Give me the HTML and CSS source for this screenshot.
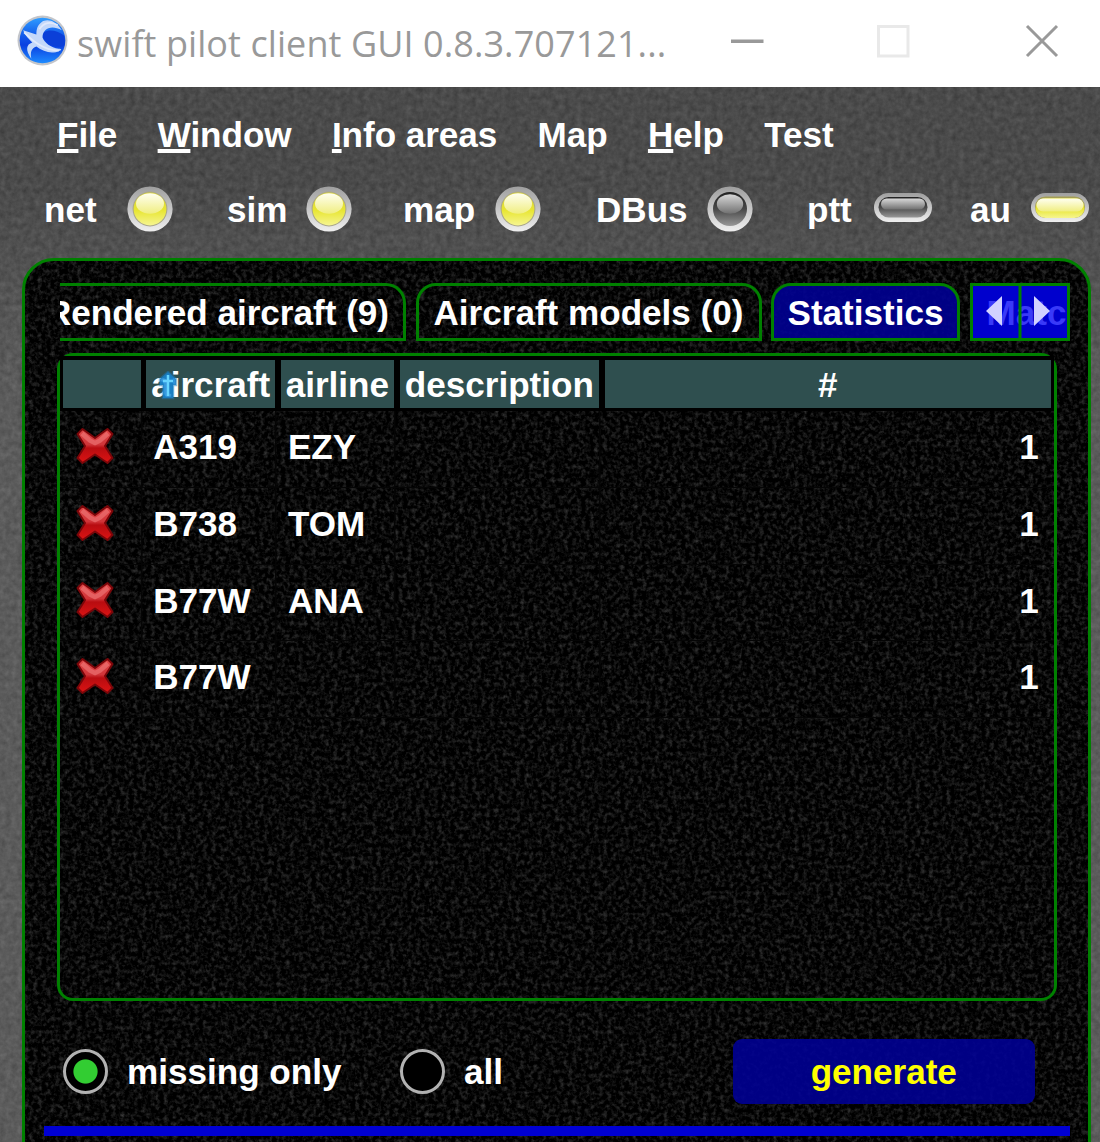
FILE: index.html
```html
<!DOCTYPE html>
<html lang="en">
<head>
<meta charset="utf-8">
<title>swift pilot client</title>
<link rel="stylesheet" href="styles.css">
</head>
<body>
<svg class="defs" width="0" height="0" aria-hidden="true">
  <defs>
    <linearGradient id="ring" x1="0" y1="0" x2="0" y2="1"><stop offset="0" stop-color="#9e9e9e"/><stop offset="1" stop-color="#efefef"/></linearGradient>
    <linearGradient id="on" x1="0" y1="0" x2="0" y2="1"><stop offset="0" stop-color="#d8d238"/><stop offset=".55" stop-color="#e8e634"/><stop offset="1" stop-color="#f6f590"/></linearGradient>
    <linearGradient id="off" x1="0" y1="0" x2="0" y2="1"><stop offset="0" stop-color="#222"/><stop offset=".5" stop-color="#484848"/><stop offset="1" stop-color="#989898"/></linearGradient>
    <linearGradient id="shineOn" x1="0" y1="0" x2="0" y2="1"><stop offset="0" stop-color="#fffff0"/><stop offset="1" stop-color="#f0ee80"/></linearGradient>
    <linearGradient id="shineOff" x1="0" y1="0" x2="0" y2="1"><stop offset="0" stop-color="#d8d8d8"/><stop offset="1" stop-color="#707070"/></linearGradient>
    <linearGradient id="crossFill" x1="0" y1="0" x2="0" y2="1"><stop offset="0" stop-color="#e04a4a"/><stop offset=".46" stop-color="#d03438"/><stop offset=".56" stop-color="#b80c10"/><stop offset="1" stop-color="#dc1414"/></linearGradient>
    <linearGradient id="ball" x1="0" y1="0" x2="0" y2="1"><stop offset="0" stop-color="#2f9dff"/><stop offset=".4" stop-color="#1259ea"/><stop offset=".6" stop-color="#0a3fe0"/><stop offset="1" stop-color="#1f8cff"/></linearGradient>
    <symbol id="led-on" viewBox="0 0 46 46">
      <circle cx="23" cy="23" r="22.6" fill="url(#ring)"/><circle cx="23" cy="23" r="17.4" fill="#a9a68a"/>
      <circle cx="23" cy="23" r="16.4" fill="url(#on)"/><ellipse cx="23" cy="17.5" rx="14" ry="10.300" fill="url(#shineOn)"/>
    </symbol>
    <symbol id="led-off" viewBox="0 0 46 46">
      <circle cx="23" cy="23" r="22.6" fill="url(#ring)"/><circle cx="23" cy="23" r="17" fill="url(#off)"/>
      <ellipse cx="23" cy="18" rx="13.2" ry="9.8" fill="url(#shineOff)"/>
    </symbol>
    <symbol id="cross" viewBox="0 0 40 40">
      <path d="M7.500 3L20 12L32.500 3L37.500 8L30 20L37.500 32L32.500 37L20 28.500L7.500 37L2.500 32L10 20L2.500 8Z" fill="url(#crossFill)" stroke="#7a0609" stroke-width="2" stroke-linejoin="round"/>
      <path d="M7 7.500L15 14.500L20 17L25 14.500L33 7.500" fill="none" stroke="#f07c7c" stroke-opacity=".6" stroke-width="4.500"/>
    </symbol>
  </defs>
</svg>
<div class="window">
  <header class="titlebar">
    <svg class="logo" viewBox="0 0 50 50">
      <circle cx="25" cy="25" r="24.5" fill="#c3c5ca"/><circle cx="25" cy="25" r="22.400" fill="url(#ball)"/>
      <path d="M26 17C32 14 39 15 46 20C48 28 46 31 43 31C35 32 27 27 25 21Z" fill="#0b3fd8"/>
      <path d="M44 15C38 5 29 3 24 7C20 10 19 14 19 19L6 15C8 20 12 24 15 27C9 29 8 34 14 43C13 36 14 33 19 31C26 36 34 39 42 35C44 34 44 33 41 33C33 32 27 27 25 22C25 13 34 9 44 15Z" fill="#c4d8fa"/>
      <path d="M7 17C15 25 25 34 41 35M22 14C26 7 33 6 40 10" fill="none" stroke="#e1eafc" stroke-width="1.800"/>
    </svg>
    <span class="title">swift pilot client GUI 0.8.3.707121...</span>
    <svg class="controls" viewBox="0 0 328 34">
      <path d="M0 17.2H32.500" stroke="#999" stroke-width="3.4"/>
      <rect x="147.500" y="2.500" width="29.500" height="29.500" fill="none" stroke="#e9e9e9" stroke-width="3"/>
      <path d="M296 2L326 32M326 2L296 32" stroke="#999" stroke-width="3"/>
    </svg>
  </header>
  <nav class="menu">
    <span><u>F</u>ile</span><span><u>W</u>indow</span><span><u>I</u>nfo areas</span><span>Map</span><span><u>H</u>elp</span><span>Test</span>
  </nav>
  <div class="status">
    <div class="signal net">net<svg class="led"><use href="#led-on"/></svg></div>
    <div class="signal sim">sim<svg class="led"><use href="#led-on"/></svg></div>
    <div class="signal map">map<svg class="led"><use href="#led-on"/></svg></div>
    <div class="signal dbus">DBus<svg class="led"><use href="#led-off"/></svg></div>
    <div class="signal ptt">ptt<svg class="pill" viewBox="0 0 58 30"><rect width="58" height="29" rx="14.500" fill="url(#ring)"/><rect x="4.500" y="4" width="49" height="20.500" rx="10" fill="url(#off)"/><rect x="7" y="5.500" width="44" height="11" rx="5.500" fill="url(#shineOff)"/></svg></div>
    <div class="signal au">au<svg class="pill" viewBox="0 0 58 30"><rect width="58" height="29" rx="14.500" fill="url(#ring)"/><rect x="4" y="3.500" width="50" height="21.500" rx="10.500" fill="#a39e55"/><rect x="4.500" y="5" width="49" height="20" rx="10" fill="url(#on)"/><rect x="5.500" y="5.500" width="47" height="13" rx="6.500" fill="url(#shineOn)"/></svg></div>
  </div>
  <main class="panel">
    <div class="tabs">
      <div class="tab first"><span>Rendered aircraft (9)</span></div>
      <div class="tab models">Aircraft models (0)</div>
      <div class="tab active">Statistics</div>
      <div class="scroller">
        <span class="next-tab">Matc</span>
        <svg viewBox="0 0 100 58"><path d="M50 0V58" stroke="#008000" stroke-width="3"/><path d="M32 13V43L16 28ZM64 13V43L80 28Z" fill="#d2d2ff"/></svg>
      </div>
    </div>
    <section class="table">
      <div class="head">
        <span></span>
        <span>aircraft<svg class="sort" viewBox="0 0 20 30"><path d="M10 1L18 8V14H15V27H5V14H2V8Z" fill="#1688d8" fill-opacity=".85" stroke="#1a78b8" stroke-opacity=".5" stroke-width="2.500"/><path d="M10 4V25M5 10H15" stroke="#67d4ff" stroke-width="2.500"/></svg></span>
        <span>airline</span><span>description</span><span>#</span>
      </div>
      <div class="row"><span><svg class="cross"><use href="#cross"/></svg></span><span>A319</span><span>EZY</span><span></span><span>1</span></div>
      <div class="row"><span><svg class="cross"><use href="#cross"/></svg></span><span>B738</span><span>TOM</span><span></span><span>1</span></div>
      <div class="row"><span><svg class="cross"><use href="#cross"/></svg></span><span>B77W</span><span>ANA</span><span></span><span>1</span></div>
      <div class="row"><span><svg class="cross"><use href="#cross"/></svg></span><span>B77W</span><span></span><span></span><span>1</span></div>
    </section>
    <div class="actions">
      <span class="radio checked"></span><span class="label missing">missing only</span>
      <span class="radio"></span><span class="label">all</span>
      <button class="generate">generate</button>
    </div>
    <div class="divider"></div>
  </main>
</div>
</body>
</html>
```
FILE: styles.css
```css
* { box-sizing: border-box; }
body { margin: 0; overflow: hidden; }
.defs { position: absolute; }
.window {
  width: 1100px; height: 1142px; overflow: hidden;
  display: flex; flex-direction: column;
  font: bold 35.1px/40px "Liberation Sans", Arial, sans-serif;
  color: #fff; white-space: nowrap;
  background:
    linear-gradient(rgba(0, 0, 0, .06) 180px, rgba(255, 255, 255, .07) 380px),
    url("data:image/svg+xml,%3Csvg xmlns='http://www.w3.org/2000/svg' width='1100' height='1142'%3E%3Cfilter id='n' x='0' y='0' width='100%25' height='100%25' color-interpolation-filters='sRGB'%3E%3CfeTurbulence type='fractalNoise' baseFrequency='.17' numOctaves='3' seed='4'/%3E%3CfeColorMatrix values='0 0 0 .15 .235 0 0 0 .15 .235 0 0 0 .15 .235 0 0 0 0 1'/%3E%3C/filter%3E%3Crect width='1100' height='1142' filter='url(%23n)'/%3E%3C/svg%3E");
}
.titlebar { height: 87px; flex: none; display: flex; align-items: flex-start; background: #fff; padding-left: 17px; }
.logo { width: 51px; height: 51px; margin-top: 15px; flex: none; }
.title { font: 36px/50px "Open Sans", "Noto Sans", sans-serif; color: #999; margin: 19px 0 0 9px; width: 654px; letter-spacing: 0.08px; }
.controls { width: 328px; height: 34px; margin-top: 24px; flex: none; }
.menu { display: flex; gap: 40.3px; padding: 28px 0 0 57px; height: 98px; flex: none; letter-spacing: -0.03px; }
.menu u { text-decoration-thickness: 4px; text-underline-offset: 2px; text-decoration-skip-ink: none; }
.status { display: flex; padding-left: 44px; height: 74px; flex: none; }
.signal { display: flex; justify-content: space-between; height: 50px; line-height: 50px; flex: none; }
.led { width: 46px; height: 46px; margin-top: 1px; }
.pill { width: 58px; height: 30px; margin-top: 8px; }
.net { width: 129px; margin-right: 54px; }
.sim { width: 125px; margin-right: 51px; }
.map { width: 138px; margin-right: 55px; }
.dbus { width: 157px; margin-right: 54px; }
.ptt { width: 125px; margin-right: 38px; }
.au { width: 119px; }
.panel {
  width: 1069px; height: 960px; margin: -1px 0 0 22px; flex: none;
  border: 3px solid #008000; border-radius: 32px; padding: 22px 18px 0 19px;
  background: #000 url("data:image/svg+xml,%3Csvg xmlns='http://www.w3.org/2000/svg' width='1070' height='960'%3E%3Cfilter id='n' x='0' y='0' width='100%25' height='100%25' color-interpolation-filters='sRGB'%3E%3CfeTurbulence type='fractalNoise' baseFrequency='.23' numOctaves='3' seed='9'/%3E%3CfeColorMatrix values='0 0 0 .42 -.18 0 0 0 .42 -.18 0 0 0 .42 -.18 0 0 0 0 1'/%3E%3C/filter%3E%3Crect width='1070' height='960' filter='url(%23n)'/%3E%3C/svg%3E");
}
.tabs { display: flex; height: 58px; padding-left: 16px; gap: 9.5px; }
.tab { border: 3px solid #008000; border-radius: 20px 20px 0 0; line-height: 54px; flex: none; text-align: center; }
.first { width: 346px; border-left: 0; border-top-left-radius: 0; overflow: hidden; display: flex; justify-content: flex-end; padding-right: 14px; }
.models { width: 346px; }
.active { width: 189px; background: rgba(0, 0, 152, .87); }
.scroller { position: relative; width: 100px; flex: none; background: #0000cd; border: 3px solid #008000; overflow: hidden; }
.scroller svg { position: absolute; left: -3px; top: -3px; width: 100px; height: 58px; }
.next-tab { display: block; padding-left: 14px; line-height: 54px; color: #3939f8; }
.table { width: 1000px; height: 648px; margin: 12px 0 0 13px; border: 3.5px solid #008000; border-radius: 16px; }
.head, .row { display: grid; grid-template-columns: 77.5px 129px 113px 199.5px 446px; column-gap: 5.7px; width: 994px; }
.head { height: 55px; padding: 4px 3px 3px; background: #000; }
.head span { position: relative; height: 48px; background: #2f4f4f; line-height: 49px; text-align: center; }
.sort { position: absolute; left: 12px; top: 11px; width: 20px; height: 30px; }
.row { height: 76.8px; padding: 0 3px; border-bottom: 1.5px solid #050505; }
.row span { line-height: 72px; padding-left: 7px; box-shadow: 1.5px 0 #050505; }
.row span:first-child { padding: 15px 0 0 12px; line-height: 0; }
.row span:last-child { text-align: right; padding-right: 12px; box-shadow: none; }
.cross { width: 40px; height: 40px; }
.actions { display: flex; align-items: center; height: 65px; margin-top: 38px; padding-left: 19px; }
.radio { width: 45px; height: 45px; flex: none; border: 3px solid #b2b2b2; border-radius: 50%; background: #000; margin-right: 19px; }
.checked { background: radial-gradient(circle, #32cd32 11.6px, #000 12.6px); }
.missing { width: 273px; }
.generate { width: 301.500px; height: 65px; margin-left: auto; margin-right: 35.500px; border: 0; border-radius: 9px; background: rgba(0, 0, 152, .87); color: #ff0; font: inherit; padding: 0; }
.divider { height: 10px; margin-top: 22px; background: #0000d2; }
```
